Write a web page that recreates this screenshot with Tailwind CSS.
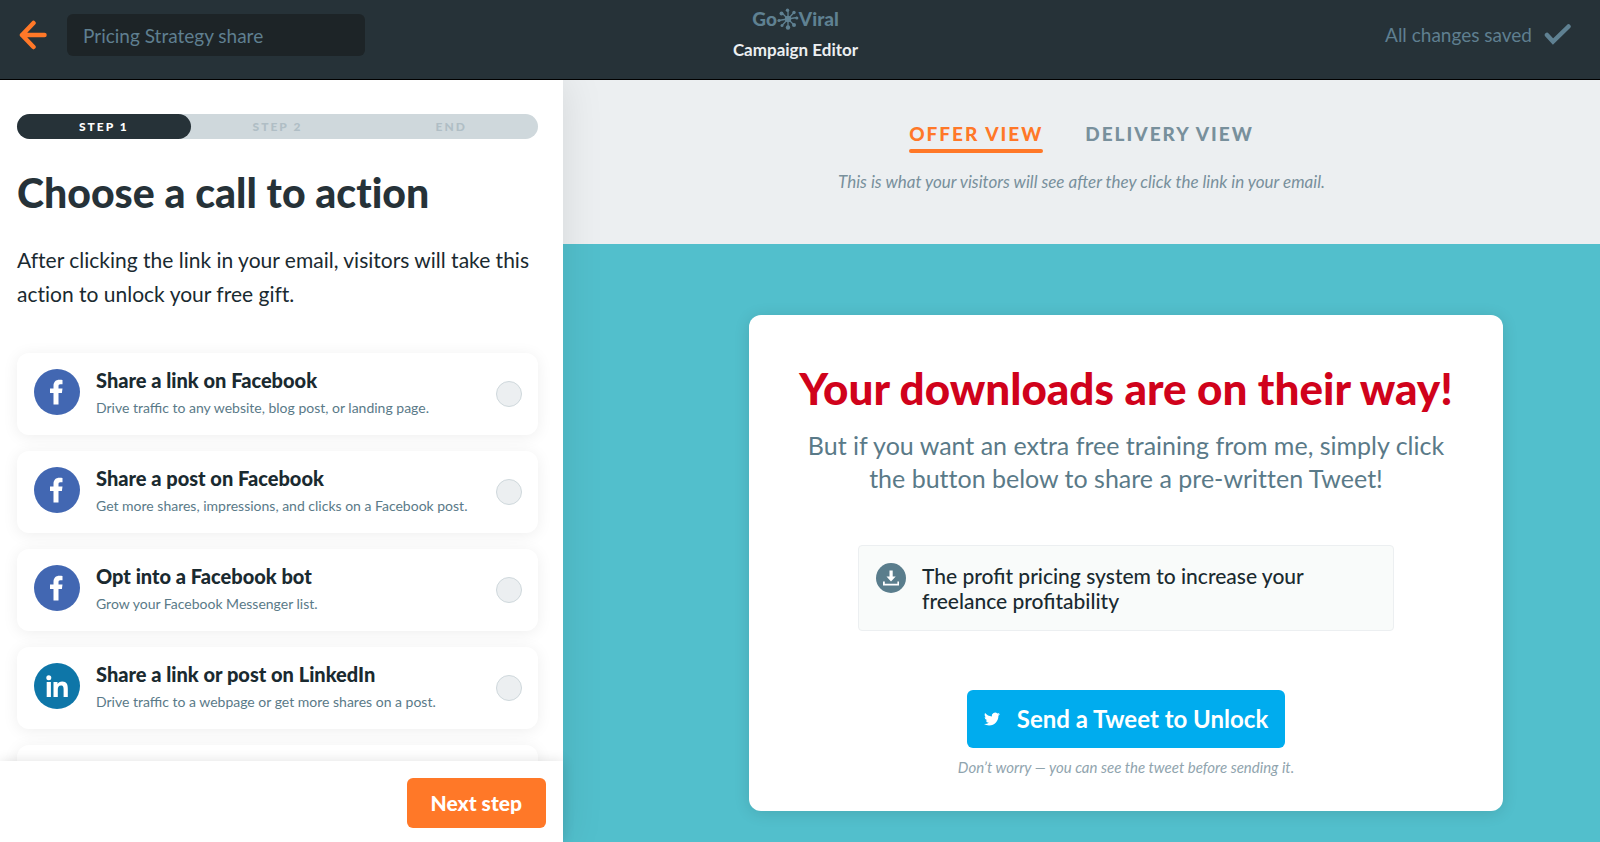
<!DOCTYPE html>
<html lang="en">
<head>
  <meta charset="UTF-8">
  <meta name="viewport" content="width=device-width, initial-scale=1.0">
  <title>Campaign Editor</title>
  <script src="https://cdn.jsdelivr.net/npm/@tailwindcss/browser@4"></script>
</head>
<body class="h-screen flex flex-col overflow-hidden bg-white font-[Lato,sans-serif] text-[#1a2a30]">

  <!-- Top bar -->
  <header class="relative z-20 h-20 shrink-0 grid grid-cols-3 items-start bg-[#263238] border-b border-black">
    <div class="flex items-center gap-5 pl-[19px] pt-[14px]">
      <a href="#" aria-label="Back">
        <svg class="w-7 h-[42px]" viewBox="0 0 28 42" fill="none" stroke="#ff7828" stroke-width="4.500" stroke-linecap="round" stroke-linejoin="round"><path d="M14.500 9L3 21l11.500 12M3 21h22.500"/></svg>
      </a>
      <input type="text" aria-label="Campaign name" value="Pricing Strategy share" class="w-[298px] h-[42px] px-4 rounded-md bg-[#1d2427] text-[19px] text-[#5f7f90]">
    </div>
    <div class="flex flex-col items-center pt-2 pr-[9px]">
      <div class="flex items-center h-[22px] text-[19px] font-black text-[#5f8192]">
        <span>Go</span>
        <svg class="w-[22px] h-[22px]" viewBox="0 0 22 22" fill="#5f8192" stroke="#5f8192" stroke-width="1.300"><path fill="none" d="M11 2v18M1.500 12.500L20 9.500M5 5l12 12M17 4.500L5 17.500"/><g stroke="none"><circle cx="11" cy="11" r="3.200"/><circle cx="10.500" cy="2.200" r="1.700"/><circle cx="11" cy="19.500" r="2.200"/><circle cx="2" cy="12.500" r="1.600"/><circle cx="19.800" cy="10" r="1.600"/><circle cx="4.500" cy="5.500" r="2"/><circle cx="17" cy="4.500" r="1.700"/><circle cx="5" cy="17.500" r="1.500"/><circle cx="17" cy="17" r="2"/></g></svg>
        <span>Viral</span>
      </div>
      <h1 class="mt-2 text-[17px] leading-6 font-bold text-[#eceff1]">Campaign Editor</h1>
    </div>
    <div class="flex items-center justify-end gap-3 pr-7 pt-[14px] h-14">
      <span class="text-[19px] text-[#5f7f90]">All changes saved</span>
      <svg class="w-7 h-6" viewBox="0 0 28 24" fill="none" stroke="#5f8192" stroke-width="4.500" stroke-linecap="round"><path d="M3 12l6 6.500L24.500 3.500" /></svg>
    </div>
  </header>

  <div class="flex flex-1 min-h-0">

    <!-- Steps panel -->
    <aside class="relative z-10 w-[563px] shrink-0 flex flex-col bg-white shadow-[0_0_40px_rgba(0,0,0,0.1)]">
      <div class="flex-1 min-h-0 overflow-hidden pl-[17px] pr-[25px] pt-[34px]">
        <ol class="grid grid-cols-3 h-[25px] rounded-full bg-[#cfd8dc] text-[12px] leading-[25px] text-center font-black tracking-[2px] text-[#b0bec5]">
          <li class="rounded-full bg-[#263238] text-white">STEP 1</li>
          <li>STEP 2</li>
          <li>END</li>
        </ol>
        <h2 class="mt-7 text-[41px] leading-[52px] font-black text-[#263238] [font-variant-ligatures:none]">Choose a call to action</h2>
        <p class="mt-6 text-[21px] leading-[34px] [font-variant-ligatures:none]">After clicking the link in your email, visitors will take this action to unlock your free gift.</p>

        <div class="mt-[42px] flex flex-col gap-4">
          <label class="flex items-center h-[82px] pl-[17px] pr-4 rounded-xl bg-white shadow-[0_2px_16px_rgba(0,0,0,0.07)]">
            <svg class="w-[46px] h-[46px] mb-1" viewBox="0 0 46 46"><circle cx="23" cy="23" r="23" fill="#4267b2"/><path fill="#fff" d="M19.500 35.500V24h-3.500v-4.400h3.500v-2.800c0-3.900 2.400-6 5.900-6 1.600 0 2.700.1 3.100.2v4.300h-2.100c-1.600 0-1.900.8-1.900 1.900v2.400h4l-.6 4.400h-3.400v11.500z"/></svg>
            <span class="flex-1 ml-4">
              <span class="block text-[20px] leading-7 font-black">Share a link on Facebook</span>
              <span class="block text-[14px] leading-7 text-[#5a7a88]">Drive traffic to any website, blog post, or landing page.</span>
            </span>
            <input type="radio" name="action" class="appearance-none w-[26px] h-[26px] rounded-full bg-[#eceff1] border border-[#cfd8dc]">
          </label>
          <label class="flex items-center h-[82px] pl-[17px] pr-4 rounded-xl bg-white shadow-[0_2px_16px_rgba(0,0,0,0.07)]">
            <svg class="w-[46px] h-[46px] mb-1" viewBox="0 0 46 46"><circle cx="23" cy="23" r="23" fill="#4267b2"/><path fill="#fff" d="M19.500 35.500V24h-3.500v-4.400h3.500v-2.800c0-3.900 2.400-6 5.900-6 1.600 0 2.700.1 3.100.2v4.300h-2.100c-1.600 0-1.900.8-1.900 1.900v2.400h4l-.6 4.400h-3.400v11.500z"/></svg>
            <span class="flex-1 ml-4">
              <span class="block text-[20px] leading-7 font-black">Share a post on Facebook</span>
              <span class="block text-[14px] leading-7 text-[#5a7a88]">Get more shares, impressions, and clicks on a Facebook post.</span>
            </span>
            <input type="radio" name="action" class="appearance-none w-[26px] h-[26px] rounded-full bg-[#eceff1] border border-[#cfd8dc]">
          </label>
          <label class="flex items-center h-[82px] pl-[17px] pr-4 rounded-xl bg-white shadow-[0_2px_16px_rgba(0,0,0,0.07)]">
            <svg class="w-[46px] h-[46px] mb-1" viewBox="0 0 46 46"><circle cx="23" cy="23" r="23" fill="#4267b2"/><path fill="#fff" d="M19.500 35.500V24h-3.500v-4.400h3.500v-2.800c0-3.900 2.400-6 5.900-6 1.600 0 2.700.1 3.100.2v4.300h-2.100c-1.600 0-1.900.8-1.900 1.900v2.400h4l-.6 4.400h-3.400v11.500z"/></svg>
            <span class="flex-1 ml-4">
              <span class="block text-[20px] leading-7 font-black">Opt into a Facebook bot</span>
              <span class="block text-[14px] leading-7 text-[#5a7a88]">Grow your Facebook Messenger list.</span>
            </span>
            <input type="radio" name="action" class="appearance-none w-[26px] h-[26px] rounded-full bg-[#eceff1] border border-[#cfd8dc]">
          </label>
          <label class="flex items-center h-[82px] pl-[17px] pr-4 rounded-xl bg-white shadow-[0_2px_16px_rgba(0,0,0,0.07)]">
            <svg class="w-[46px] h-[46px] mb-1" viewBox="0 0 46 46"><circle cx="23" cy="23" r="23" fill="#0e76a8"/><g fill="#fff"><circle cx="14.800" cy="14.800" r="2.500"/><path d="M12.700 19h4.200v15h-4.200zM19.500 19h4v2.100c.8-1.400 2.400-2.500 4.700-2.500 4.600 0 5.600 3 5.600 7.200V34h-4.200v-7.300c0-2-.2-4.100-2.600-4.100-2.500 0-3.200 1.900-3.200 4V34h-4.300z"/></g></svg>
            <span class="flex-1 ml-4">
              <span class="block text-[20px] leading-7 font-black">Share a link or post on LinkedIn</span>
              <span class="block text-[14px] leading-7 text-[#5a7a88]">Drive traffic to a webpage or get more shares on a post.</span>
            </span>
            <input type="radio" name="action" class="appearance-none w-[26px] h-[26px] rounded-full bg-[#eceff1] border border-[#cfd8dc]">
          </label>
          <div class="h-[82px] shrink-0 rounded-xl bg-white shadow-[0_2px_16px_rgba(0,0,0,0.07)]"></div>
        </div>
      </div>

      <div class="relative shrink-0 flex justify-end pt-[17px] pb-[14px] pr-[17px] bg-white shadow-[0_0_12px_rgba(0,0,0,0.12)]">
        <button type="button" class="h-[50px] px-6 rounded-md bg-[#ff7828] text-[21px] font-black text-white">Next step</button>
      </div>
    </aside>

    <!-- Preview -->
    <main class="flex-1 flex flex-col">
      <div class="h-[164px] shrink-0 flex flex-col items-center pt-[43px] bg-[#eceff1]">
        <nav class="flex gap-[42px] text-[19px] leading-[22px] font-black tracking-[2px]">
          <a href="#" class="text-[#ff7828]">OFFER VIEW<span class="block mt-1 h-1 rounded-full bg-[#ff7828]"></span></a>
          <a href="#" class="text-[#78909c]">DELIVERY VIEW</a>
        </nav>
        <p class="mt-[17px] text-[17px] leading-6 italic text-[#78909c]">This is what your visitors will see after they click the link in your email.</p>
      </div>

      <div class="flex-1 pt-[71px] pl-[186px] pr-[97px] bg-[#52bfcc]">
        <section class="flex flex-col items-center pt-[46px] pb-8 rounded-xl bg-white text-center shadow-[0_2px_16px_rgba(0,0,0,0.12)]">
          <h2 class="text-[44px] leading-[54px] font-black text-[#d0021b]">Your downloads are on their way!</h2>
          <p class="mt-[14px] text-[25px] leading-[33px] text-[#5a7a88] [font-variant-ligatures:none]">But if you want an extra free training from me, simply click<br>the button below to share a pre-written Tweet!</p>
          <div class="mt-[50px] w-[536px] flex gap-4 pl-[17px] pr-10 pt-[17px] pb-[17px] rounded border border-[#eceff1] bg-[#f9fbfa] text-left">
            <svg class="w-[30px] h-[30px] shrink-0" viewBox="0 0 30 30"><circle cx="15" cy="15" r="15" fill="#5a7d8c"/><path fill="#fff" d="M13.500 7.500h3.200v6h3L15 18.500l-4.500-5h3zM7 18.500h1.800v2.200h12.600v-2.200H23v4H7z"/></svg>
            <p class="text-[21px] leading-[25px] font-medium">The profit pricing system to increase your freelance profitability</p>
          </div>
          <button type="button" class="mt-[59px] h-[58px] px-[17px] flex items-center gap-[17px] rounded-md bg-[#00acee] text-[24px] font-bold text-white">
            <svg class="w-4 h-4" viewBox="0 0 24 24" fill="#fff"><path d="M23.950 4.570a10 10 0 0 1-2.820.77 4.960 4.960 0 0 0 2.160-2.720c-.95.550-2 .95-3.130 1.180a4.920 4.920 0 0 0-8.380 4.480C7.690 8.100 4.070 6.130 1.640 3.160a4.820 4.820 0 0 0-.67 2.480c0 1.710.87 3.210 2.190 4.100a4.900 4.900 0 0 1-2.230-.62v.06a4.920 4.920 0 0 0 3.950 4.830 5 5 0 0 1-2.210.08 4.940 4.940 0 0 0 4.600 3.420A9.870 9.870 0 0 1 0 19.540a13.990 13.990 0 0 0 7.560 2.210c9.050 0 14-7.500 14-13.980 0-.21 0-.42-.02-.63a9.940 9.940 0 0 0 2.410-2.570z"/></svg>
            Send a Tweet to Unlock
          </button>
          <p class="mt-[7px] text-[15px] leading-6 italic text-[#90a4ae]">Don’t worry — you can see the tweet before sending it.</p>
        </section>
      </div>
    </main>
  </div>

</body>
</html>
